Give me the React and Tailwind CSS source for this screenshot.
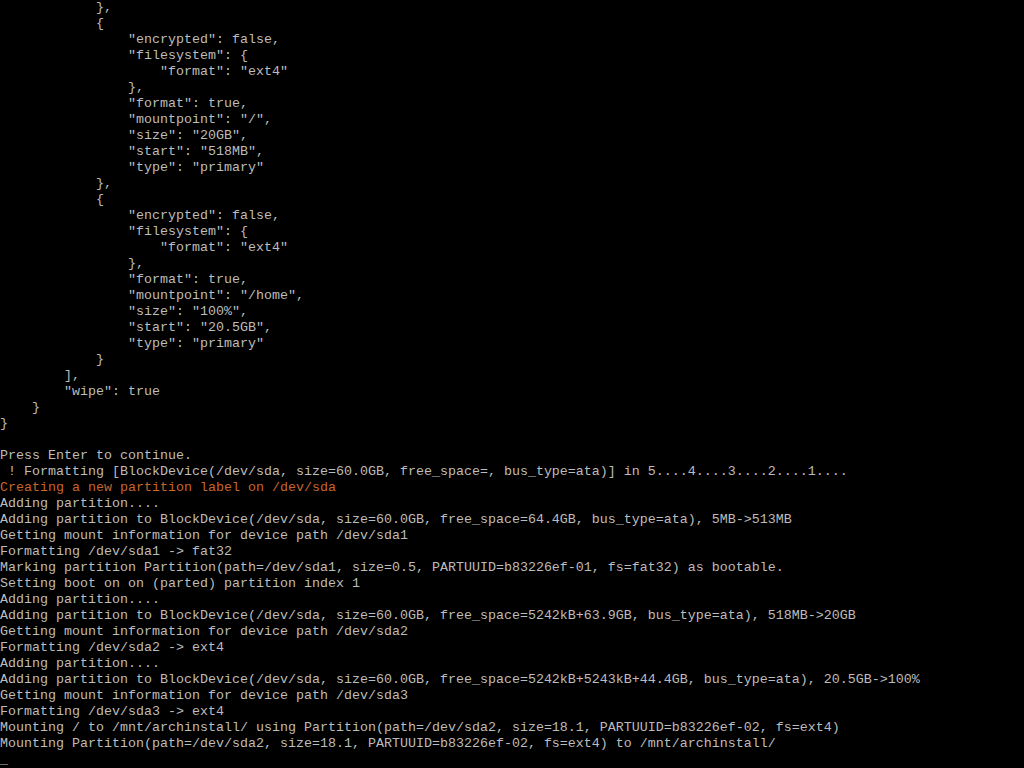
import React from "react";

const LINES = [
  "            },",
  "            {",
  '                "encrypted": false,',
  '                "filesystem": {',
  '                    "format": "ext4"',
  "                },",
  '                "format": true,',
  '                "mountpoint": "/",',
  '                "size": "20GB",',
  '                "start": "518MB",',
  '                "type": "primary"',
  "            },",
  "            {",
  '                "encrypted": false,',
  '                "filesystem": {',
  '                    "format": "ext4"',
  "                },",
  '                "format": true,',
  '                "mountpoint": "/home",',
  '                "size": "100%",',
  '                "start": "20.5GB",',
  '                "type": "primary"',
  "            }",
  "        ],",
  '        "wipe": true',
  "    }",
  "}",
  "",
  "Press Enter to continue.",
  " ! Formatting [BlockDevice(/dev/sda, size=60.0GB, free_space=, bus_type=ata)] in 5....4....3....2....1....",
  { text: "Creating a new partition label on /dev/sda", warn: true },
  "Adding partition....",
  "Adding partition to BlockDevice(/dev/sda, size=60.0GB, free_space=64.4GB, bus_type=ata), 5MB->513MB",
  "Getting mount information for device path /dev/sda1",
  "Formatting /dev/sda1 -> fat32",
  "Marking partition Partition(path=/dev/sda1, size=0.5, PARTUUID=b83226ef-01, fs=fat32) as bootable.",
  "Setting boot on on (parted) partition index 1",
  "Adding partition....",
  "Adding partition to BlockDevice(/dev/sda, size=60.0GB, free_space=5242kB+63.9GB, bus_type=ata), 518MB->20GB",
  "Getting mount information for device path /dev/sda2",
  "Formatting /dev/sda2 -> ext4",
  "Adding partition....",
  "Adding partition to BlockDevice(/dev/sda, size=60.0GB, free_space=5242kB+5243kB+44.4GB, bus_type=ata), 20.5GB->100%",
  "Getting mount information for device path /dev/sda3",
  "Formatting /dev/sda3 -> ext4",
  "Mounting / to /mnt/archinstall/ using Partition(path=/dev/sda2, size=18.1, PARTUUID=b83226ef-02, fs=ext4)",
  "Mounting Partition(path=/dev/sda2, size=18.1, PARTUUID=b83226ef-02, fs=ext4) to /mnt/archinstall/",
];

export default function App() {
  return (
    <div className="w-[1024px] h-[768px] overflow-hidden bg-black text-[#bcbcbc] font-['Liberation_Mono',monospace] text-[13.33px] leading-[16px]">
      {LINES.map((line, i) => {
        const isObj = typeof line === "object";
        return (
          <div
            key={i}
            className={`h-4 whitespace-pre ${isObj ? "text-[#c4662e]" : ""}`}
          >
            {isObj ? line.text : line}
          </div>
        );
      })}
      {/* cursor */}
      <div className="h-4 whitespace-pre">_</div>
    </div>
  );
}
